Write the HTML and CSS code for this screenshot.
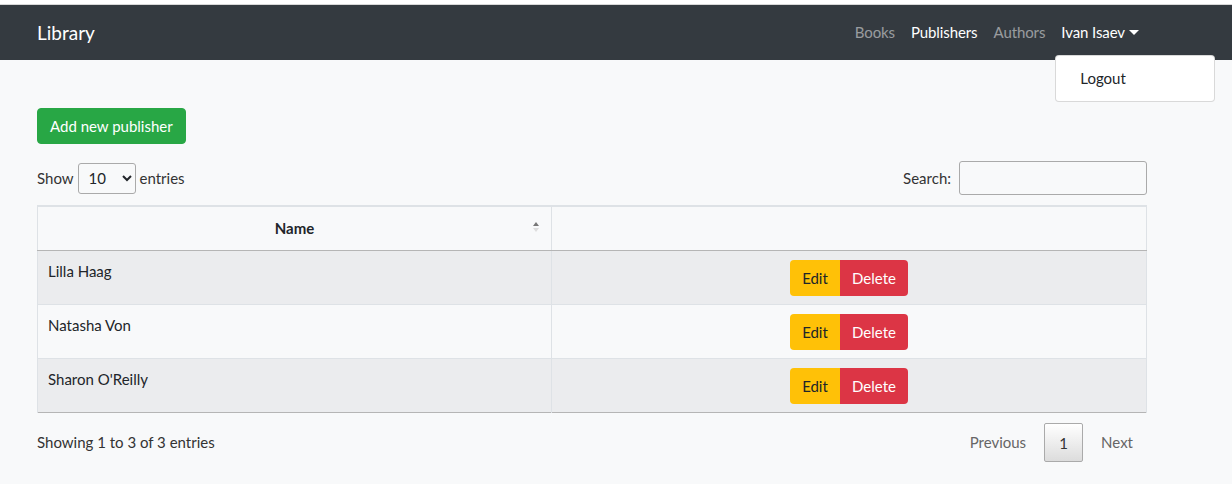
FILE: index.html
```html
<!DOCTYPE html>
<html lang="en">
<head>
<meta charset="utf-8">
<title>Library</title>
<link rel="stylesheet" href="styles.css">
</head>
<body>
<div class="topline"></div>
<nav class="navbar">
  <div class="nav-inner">
    <a class="brand" href="#">Library</a>
    <ul class="nav-links">
      <li><a class="nav-link" href="#">Books</a></li>
      <li><a class="nav-link active" href="#">Publishers</a></li>
      <li><a class="nav-link" href="#">Authors</a></li>
      <li class="dropdown">
        <a class="nav-link active toggle" href="#">Ivan Isaev<span class="caret"></span></a>
        <div class="dropdown-menu"><a class="dropdown-item" href="#">Logout</a></div>
      </li>
    </ul>
  </div>
</nav>
<main class="container">
  <button class="btn-add">Add new publisher</button>
  <div class="dt-top">
    <label class="dt-length">Show
      <select class="dt-select"><option>10</option><option>25</option><option>50</option></select>
      entries</label>
    <label class="dt-search">Search: <input type="search" class="dt-input"></label>
  </div>
  <table class="dt">
    <thead>
      <tr><th class="sort">Name<span class="arrows"><span class="up"></span><span class="down"></span></span></th><th></th></tr>
    </thead>
    <tbody>
      <tr class="odd"><td>Lilla Haag</td><td class="actions"><div class="btn-group"><button class="btn-edit">Edit</button><button class="btn-del">Delete</button></div></td></tr>
      <tr><td>Natasha Von</td><td class="actions"><div class="btn-group"><button class="btn-edit">Edit</button><button class="btn-del">Delete</button></div></td></tr>
      <tr class="odd"><td>Sharon O'Reilly</td><td class="actions"><div class="btn-group"><button class="btn-edit">Edit</button><button class="btn-del">Delete</button></div></td></tr>
    </tbody>
  </table>
  <div class="dt-bottom">
    <div class="dt-info">Showing 1 to 3 of 3 entries</div>
    <div class="pager">
      <a class="page prev" href="#">Previous</a>
      <a class="page current" href="#">1</a>
      <a class="page next" href="#">Next</a>
    </div>
  </div>
</main>
</body>
</html>
```
FILE: styles.css
```css
* { box-sizing: border-box; }
html, body { margin: 0; padding: 0; }
body {
  background: #f8f9fa;
  font-family: "Lato", "Open Sans", "Liberation Sans", sans-serif;
  font-size: 15px;
  color: #212529;
}
a { text-decoration: none; }
.topline { height: 5px; background: #fff; border-bottom: 1px solid #d8d8d8; }
.navbar { background: #343a40; height: 55px; }
.nav-inner {
  width: 1110px; margin-left: 37px; height: 100%;
  display: flex; align-items: center; justify-content: space-between;
  padding-bottom: 1px;
}
.brand { color: #fff; font-size: 19px; }
.nav-links { list-style: none; margin: 0; padding: 0; display: flex; align-items: center; }
.nav-link { display: block; padding: 8px 8px; color: rgba(255,255,255,.5); font-size: 15px; letter-spacing: -0.1px; }
.nav-link.active { color: #fff; }
.dropdown { position: relative; }
.caret {
  display: inline-block; margin-left: 4px; vertical-align: 3px;
  border-top: 5px solid #fff; border-left: 5px solid transparent; border-right: 5px solid transparent;
}
.dropdown-menu {
  position: absolute; top: 40px; left: 2px; width: 160px; height: 47px;
  background: #fff; border: 1px solid rgba(0,0,0,.15); border-radius: 4px;
  padding: 0;
}
.dropdown-item { display: block; padding: 12px 24px; color: #212529; font-size: 15px; line-height: 20px; }
.container { width: 1110px; margin-left: 37px; padding-top: 48px; }
.btn-add {
  font: inherit; font-size: 15px; color: #fff; background: #28a745; margin-top: 0;
  border: 1px solid #28a745; border-radius: 4px; height: 36px; padding: 0 12px; cursor: pointer;
  display: block;
}
.dt-top { display: flex; justify-content: space-between; align-items: center; margin-top: 17px; height: 34px; }
.dt-length, .dt-search { color: #333; font-size: 15px; display: flex; align-items: center; gap: 4px; }
.dt-select {
  font: inherit; font-size: 15px; width: 58px; height: 31px; padding: 0 6px;
  border: 1px solid #aaa; border-radius: 3px; background: transparent; color: #212529;
}
.dt-input {
  width: 188px; height: 34px; border: 1px solid #aaa; border-radius: 3px; background: transparent;
  margin-left: 4px; font: inherit;
}
.dt {
  width: 100%; margin-top: 10px; border-collapse: collapse; border-top: 2px solid #dee2e6;
  border-bottom: 1px solid #b5b5b5;
}
.dt th, .dt td { border-left: 1px solid #dee2e6; border-right: 1px solid #dee2e6; }
.dt th {
  height: 44px; font-weight: bold; text-align: center; color: #212529; font-size: 15px;
  border-bottom: 1px solid #b5b5b5; position: relative; width: 514px; padding-bottom: 2px;
}
.dt th:last-child { width: auto; }
.arrows { position: absolute; right: 12px; top: 15px; display: flex; flex-direction: column; gap: 2px; }
.arrows .up { border-bottom: 4px solid #777; border-left: 3px solid transparent; border-right: 3px solid transparent; }
.arrows .down { border-top: 4px solid #ddd; border-left: 3px solid transparent; border-right: 3px solid transparent; }
.dt td { vertical-align: top; padding: 10px 10px; line-height: 20px; border-top: 1px solid #dee2e6; }
.dt tr.odd td { background: #ebecee; }
.dt td.actions { text-align: center; padding: 9px 10px 8px; }
.btn-group { display: flex; justify-content: center; }
.btn-group button { font: inherit; font-size: 15px; height: 36px; border: 0; cursor: pointer; }
.btn-edit { background: #ffc107; color: #212529; width: 50px; border-radius: 4px 0 0 4px; }
.btn-del { background: #dc3545; color: #fff; width: 68px; border-radius: 0 4px 4px 0; }
.dt-bottom { display: flex; justify-content: space-between; align-items: center; margin-top: 10px; }
.dt-info { color: #333; font-size: 15px; }
.pager { display: flex; align-items: center; margin-right: 0; }
.page { color: #666; padding: 0 14px; font-size: 15px; line-height: 39px; }
.page.current {
  width: 39px; height: 39px; padding: 0; text-align: center; color: #333;
  border: 1px solid #aaa; border-radius: 2px; margin: 0 4px;
  background: linear-gradient(#fff, #dcdcdc);
}
```
